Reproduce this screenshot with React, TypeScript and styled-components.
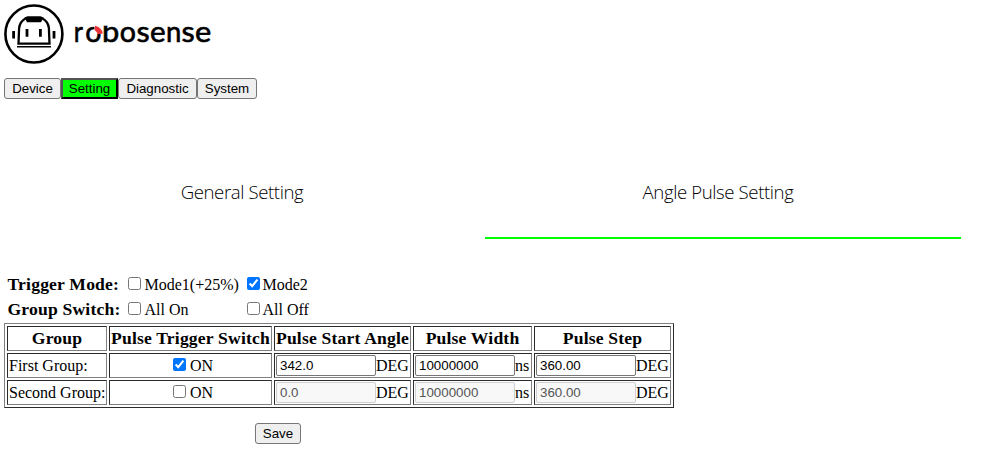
import React, { useState } from 'react';
import styled, { createGlobalStyle } from 'styled-components';

const GlobalStyle = createGlobalStyle`
  * { box-sizing: border-box; }
  body {
    margin: 0;
    background: #fff;
    color: #000;
    font: 16px/18px "Liberation Serif", "Times New Roman", serif;
  }
`;

const Page = styled.main`
  width: 994px;
  height: 467px;
  padding: 4px;
  overflow: hidden;
`;

const Header = styled.header`
  height: 74px;
`;

const Logo = styled.svg`
  display: block;
`;

const Wordmark = styled.text`
  font: 400 28px Lato, sans-serif;
  stroke: #000;
  stroke-width: 0.6px;
`;

const Nav = styled.nav`
  display: flex;
  height: 21px;
`;

const Button = styled.button<{ $width: number; $active?: boolean }>`
  width: ${p => p.$width}px;
  height: 21px;
  padding: 0;
  font: 13.333px/15px "Liberation Sans", Arial, sans-serif;
  color: #000;
  white-space: nowrap;
  background: ${p => (p.$active ? '#00ff00' : '#efefef')};
  border: ${p => (p.$active ? '2px outset #000' : '1px solid #767676')};
  border-radius: ${p => (p.$active ? 0 : 3)}px;
`;

const Tabs = styled.div`
  display: grid;
  grid-template-columns: 476px 476px;
  column-gap: 5px;
  margin-top: 46px;
`;

const Tab = styled.div<{ $active?: boolean; $shift?: number }>`
  height: 94px;
  padding-right: ${p => p.$shift || 0}px;
  border-bottom: 2px solid ${p => (p.$active ? '#00ff00' : 'transparent')};
  font: 300 18.6px/94px "Open Sans", "Noto Sans", sans-serif;
  letter-spacing: -0.4px;
  text-align: center;
`;

const Modes = styled.div`
  display: grid;
  grid-template-columns: 120px 119px 120px;
  grid-auto-rows: 25px;
  align-items: center;
  margin: 33px 0 0 3.5px;
`;

const Title = styled.strong`
  padding-bottom: 2px;
  font-size: 17.6px;
  letter-spacing: 0.18px;
  white-space: nowrap;
`;

const Option = styled.label<{ $gap: number }>`
  display: flex;
  align-items: center;
  gap: ${p => p.$gap}px;
  white-space: nowrap;
`;

const Check = styled.input.attrs({ type: 'checkbox' })`
  flex: none;
  width: 13px;
  height: 13px;
  margin: 0 0 2px;
`;

const Table = styled.table`
  width: 670px;
  margin-top: 1px;
  table-layout: fixed;
  border: 1px solid;
  border-color: #808080 #2c2c2c #2c2c2c #808080;
  border-collapse: separate;
  border-spacing: 2px;
`;

const Col = styled.col<{ $width: number }>`
  width: ${p => p.$width}px;
`;

const Row = styled.tr`
  height: 25px;
`;

const HeadCell = styled.th`
  height: 25px;
  padding: 0 0 2px;
  font-size: 17.6px;
  line-height: 20px;
  letter-spacing: 0.18px;
  white-space: nowrap;
  border: 1px solid;
  border-color: #2c2c2c #808080 #808080 #2c2c2c;
`;

const Cell = styled.td`
  height: 25px;
  padding: 0 1px;
  line-height: 20px;
  white-space: nowrap;
  border: 1px solid;
  border-color: #2c2c2c #808080 #808080 #2c2c2c;
`;

const Field = styled.div<{ $center?: boolean }>`
  display: flex;
  align-items: center;
  justify-content: ${p => (p.$center ? 'center' : 'flex-start')};
  gap: ${p => (p.$center ? 4 : 0)}px;
  height: 21px;
  padding-left: ${p => (p.$center ? 5 : 0)}px;
`;

const NumberInput = styled.input`
  flex: none;
  width: 100px;
  height: 21px;
  padding: 1px 3px;
  font: 13.333px/15px "Liberation Sans", Arial, sans-serif;
  color: #000;
  background: #fff;
  border: 1px solid #767676;
  border-radius: 2px;
  &:disabled {
    color: #545454;
    background: #f8f8f8;
    border-color: #d0d0d0;
  }
`;

const Actions = styled.div`
  display: flex;
  padding: 15px 0 0 251px;
`;

// Each letter with its left edge and horizontal stretch.
const letters: [string, number, number][] = [
  ['r', 73.8, 0.9], ['o', 85.3, 1.02], ['b', 102, 1.1], ['o', 119.7, 1.02], ['s', 136.6, 1.09],
  ['e', 150.1, 1.06], ['n', 165.9, 0.98], ['s', 181.5, 1.09], ['e', 195, 1.1],
];

function RobosenseLogo() {
  return (
    <Logo width="212" height="62" viewBox="4 4 212 62" aria-label="robosense">
      <circle cx="33.900" cy="34" r="28.500" fill="none" stroke="#000" strokeWidth="2.600" />
      <path d="M24.500 17.500l3-1.200h13l3 1.200-2.500 4.700h-14z" fill="#000" />
      <path d="M25.500 18.500q-5.500 3-6.400 9.500l-.6 15.700h31L48.900 28q-.9-6.500-6.400-9.500" fill="none" stroke="#000" strokeWidth="2.300" />
      <path d="M17 46.800h34" stroke="#000" strokeWidth="1.400" />
      <path d="M13.600 31v7.500M54 31v7.500M27 29v7.800M40.400 29v7.800" stroke="#000" strokeWidth="2.800" />
      {letters.map(([letter, x, stretch], i) => (
        <Wordmark key={i} transform={`translate(${x} 42) scale(${stretch} 1)`}>{letter}</Wordmark>
      ))}
      <path d="M101 18h8v7.700h-8z" fill="#fff" />
      <path d="M94.500 32V26h8.300v8h-4z" fill="#fff" />
      <path d="M95 25.700q6.700 1.500 7.800 7.800l-4.300.7-3.800-4.200z" fill="#ed3237" />
    </Logo>
  );
}

const groups = [
  { name: 'First Group:', on: true, angle: '342.0', width: '10000000', step: '360.00' },
  { name: 'Second Group:', on: false, angle: '0.0', width: '10000000', step: '360.00' },
];

function GroupRow({ group }: { group: (typeof groups)[number] }) {
  const [on, setOn] = useState(group.on);
  return (
    <Row>
      <Cell>{group.name}</Cell>
      <Cell>
        <Field as="label" $center>
          <Check checked={on} onChange={e => setOn(e.target.checked)} />ON
        </Field>
      </Cell>
      <Cell><Field><NumberInput defaultValue={group.angle} disabled={!on} />DEG</Field></Cell>
      <Cell><Field><NumberInput defaultValue={group.width} disabled={!on} />ns</Field></Cell>
      <Cell><Field><NumberInput defaultValue={group.step} disabled={!on} />DEG</Field></Cell>
    </Row>
  );
}

export default function App() {
  return (
    <Page>
      <GlobalStyle />
      <Header><RobosenseLogo /></Header>
      <Nav>
        <Button $width={57}>Device</Button>
        <Button $width={57} $active>Setting</Button>
        <Button $width={79}>Diagnostic</Button>
        <Button $width={60}>System</Button>
      </Nav>
      <Tabs>
        <Tab>General Setting</Tab>
        <Tab $active $shift={10}>Angle Pulse Setting</Tab>
      </Tabs>
      <Modes>
        <Title>Trigger Mode:</Title>
        <Option $gap={4}><Check />Mode1(+25%)</Option>
        <Option $gap={3}><Check defaultChecked />Mode2</Option>
        <Title>Group Switch:</Title>
        <Option $gap={4}><Check />All On</Option>
        <Option $gap={3}><Check />All Off</Option>
      </Modes>
      <Table>
        <colgroup>
          {[100, 163, 137, 119, 137].map((w, i) => <Col key={i} $width={w} />)}
        </colgroup>
        <thead>
          <Row>
            <HeadCell>Group</HeadCell>
            <HeadCell>Pulse Trigger Switch</HeadCell>
            <HeadCell>Pulse Start Angle</HeadCell>
            <HeadCell>Pulse Width</HeadCell>
            <HeadCell>Pulse Step</HeadCell>
          </Row>
        </thead>
        <tbody>{groups.map(g => <GroupRow key={g.name} group={g} />)}</tbody>
      </Table>
      <Actions><Button $width={46}>Save</Button></Actions>
    </Page>
  );
}
